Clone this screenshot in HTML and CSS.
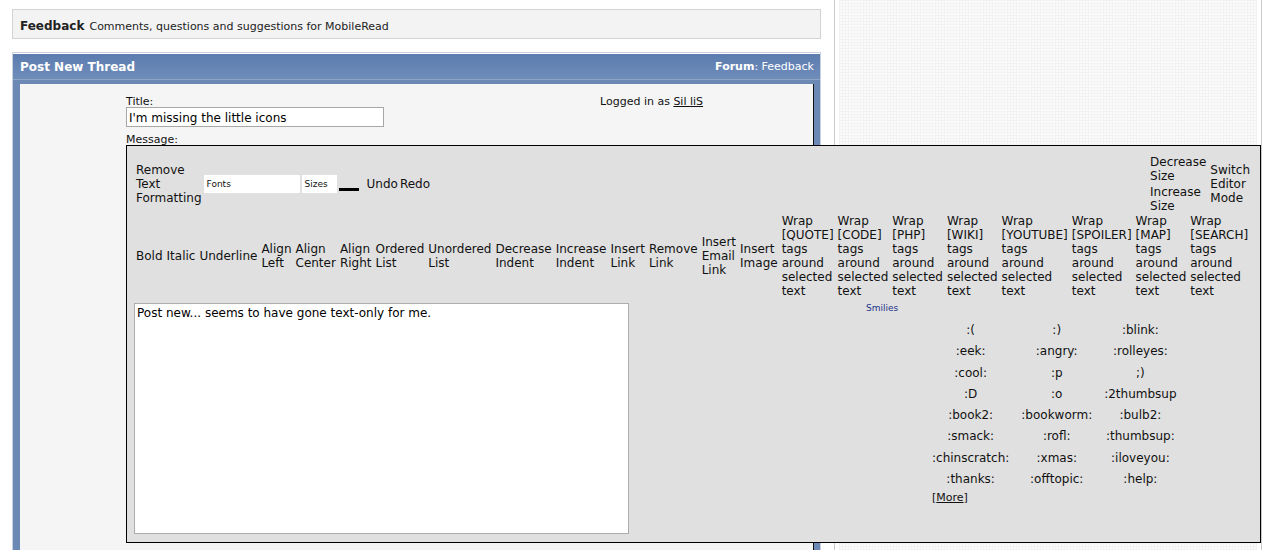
FILE: index.html
```html
<!DOCTYPE html>
<html>
<head>
<meta charset="utf-8">
<title>Post New Thread</title>
<link rel="stylesheet" href="styles.css">
</head>
<body>
<div class="page">
  <div class="main">
    <div class="catbox"><b class="cat-title">Feedback</b> <span class="cat-desc">Comments, questions and suggestions for MobileRead</span></div>

    <div class="panel">
      <div class="panel-head">
        <span class="panel-title">Post New Thread</span>
        <span class="panel-forum"><b>Forum</b>: Feedback</span>
      </div>
      <div class="panel-body">
        <div class="inner">
          <div class="toprow">
            <div class="titlecol">
              <div class="lbl">Title:</div>
              <input class="title-input" type="text" value="I'm missing the little icons">
            </div>
            <div class="logged">Logged in as <u>Sil liS</u></div>
          </div>
          <div class="lbl msg-lbl">Message:</div>

          <div class="editor">
            <div class="tb-row1">
              <span class="tb">Remove Text Formatting</span>
              <span class="sel sel-fonts">Fonts</span>
              <span class="sel sel-sizes">Sizes</span>
              <span class="color"><span class="color-bar"></span></span>
              <span class="tb">Undo</span>
              <span class="tb">Redo</span>
              <span class="size-block">
                <span class="tb">Decrease Size</span>
                <span class="tb">Increase Size</span>
              </span>
              <span class="tb">Switch Editor Mode</span>
            </div>
            <div class="tb-row2">
              <span class="tb">Bold</span>
              <span class="tb">Italic</span>
              <span class="tb">Underline</span>
              <span class="tb">Align Left</span>
              <span class="tb">Align Center</span>
              <span class="tb">Align Right</span>
              <span class="tb">Ordered List</span>
              <span class="tb">Unordered List</span>
              <span class="tb">Decrease Indent</span>
              <span class="tb">Increase Indent</span>
              <span class="tb">Insert Link</span>
              <span class="tb">Remove Link</span>
              <span class="tb">Insert Email Link</span>
              <span class="tb">Insert Image</span>
              <span class="tb">Wrap [QUOTE] tags around selected text</span>
              <span class="tb">Wrap [CODE] tags around selected text</span>
              <span class="tb">Wrap [PHP] tags around selected text</span>
              <span class="tb">Wrap [WIKI] tags around selected text</span>
              <span class="tb">Wrap [YOUTUBE] tags around selected text</span>
              <span class="tb">Wrap [SPOILER] tags around selected text</span>
              <span class="tb">Wrap [MAP] tags around selected text</span>
              <span class="tb">Wrap [SEARCH] tags around selected text</span>
            </div>
            <div class="edit-area">
              <textarea class="message" readonly>Post new... seems to have gone text-only for me.</textarea>
              <div class="smilies">
                <div class="smilies-lbl">Smilies</div>
                <table class="smilies-table">
                  <tr><td>:(</td><td>:)</td><td>:blink:</td></tr>
                  <tr><td>:eek:</td><td>:angry:</td><td>:rolleyes:</td></tr>
                  <tr><td>:cool:</td><td>:p</td><td>;)</td></tr>
                  <tr><td>:D</td><td>:o</td><td>:2thumbsup</td></tr>
                  <tr><td>:book2:</td><td>:bookworm:</td><td>:bulb2:</td></tr>
                  <tr><td>:smack:</td><td>:rofl:</td><td>:thumbsup:</td></tr>
                  <tr><td>:chinscratch:</td><td>:xmas:</td><td>:iloveyou:</td></tr>
                  <tr><td>:thanks:</td><td>:offtopic:</td><td>:help:</td></tr>
                  <tr><td class="more" colspan="3">[<u>More</u>]</td></tr>
                </table>
              </div>
            </div>
          </div>
        </div>
      </div>
    </div>
  </div>

  <div class="sidebar">
    <div class="sidebar-inner"></div>
  </div>
</div>
</body>
</html>
```

FILE: styles.css
```css
html, body {
  margin: 0;
  padding: 0;
  height: 550px;
  overflow: hidden;
  background: #fff;
}

body {
  font-family: "DejaVu Sans", Verdana, sans-serif;
  color: #000;
}

.page {
  display: flex;
  height: 550px;
}

.main {
  flex: none;
  width: 809px;
  margin-left: 12px;
  padding-top: 9px;
}

/* category box */
.catbox {
  height: 28px;
  line-height: 29px;
  border: 1px solid #d3d3d3;
  background: #f3f3f3;
  padding: 0 7px;
  color: #222;
  white-space: nowrap;
}

.cat-title {
  font-size: 12px;
}

.cat-desc {
  font-size: 11px;
}

/* post panel */
.panel {
  margin-top: 13px;
  border: 1px solid #c8d0dd;
  padding-top: 1px;
  background: #fff;
}

.panel-head {
  height: 25px;
  padding: 0 6px 0 7px;
  display: flex;
  align-items: center;
  justify-content: space-between;
  background: linear-gradient(#5c7caf, #6f8dba);
  color: #fff;
}

.panel-title {
  font-size: 12px;
  font-weight: bold;
}

.panel-forum {
  font-size: 11px;
}

.panel-body {
  background: #6c89b6;
  border-top: 1px solid #8ea4c7;
  padding: 4px 6px 0 7px;
}

.inner {
  background: #f5f5f5;
  border-right: 1px solid #111;
  min-height: 560px;
  padding: 12px 0 0 106px;
}

.toprow {
  display: flex;
  align-items: flex-start;
}

.titlecol {
  width: 474px;
}

.lbl,
.logged {
  font-size: 11px;
  line-height: 12px;
  color: #111;
}

.title-input {
  display: block;
  width: 258px;
  height: 20px;
  box-sizing: border-box;
  margin: -1px 0 0 0;
  border: 1px solid #a7a7a7;
  background: #fff;
  padding: 1px 2px 0 2px;
  font-family: "DejaVu Sans", Verdana, sans-serif;
  font-size: 12px;
  color: #000;
  outline: none;
}

.msg-lbl {
  margin-top: 7px;
}

/* editor */
.editor {
  position: relative;
  z-index: 2;
  width: 1135px;
  height: 398px;
  box-sizing: border-box;
  border: 1px solid #000;
  background: #e0e0e0;
  margin-top: -1px;
  padding: 8px 7px;
  font-size: 12px;
  color: #111;
}

.tb {
  width: min-content;
  line-height: 14px;
  flex: none;
}

.tb-row1 {
  height: 58px;
  display: flex;
  align-items: center;
  gap: 2px;
  padding: 1px 3px 0 2px;
  box-sizing: border-box;
}

.sel {
  flex: none;
  height: 18px;
  box-sizing: border-box;
  background: #fff;
  font-size: 9px;
  padding-left: 3px;
  display: flex;
  align-items: center;
}

.sel-fonts {
  width: 96px;
}

.sel-sizes {
  width: 35px;
}

.color {
  flex: none;
  width: 26px;
  height: 18px;
  box-sizing: border-box;
  padding-bottom: 2px;
  display: flex;
  align-items: flex-end;
}

.color-bar {
  width: 20px;
  height: 3px;
  background: #000;
}

.size-block {
  margin-left: auto;
  display: flex;
  flex-direction: column;
  gap: 2px;
  margin-right: 2px;
}

.tb-row2 {
  margin-top: 1px;
  height: 84px;
  display: flex;
  align-items: center;
  gap: 4px;
  padding: 1px 0 0 2px;
  box-sizing: border-box;
}

.edit-area {
  margin-top: 6px;
  display: flex;
}

.message {
  flex: none;
  width: 495px;
  height: 231px;
  box-sizing: border-box;
  margin: 0;
  border: 1px solid #adadad;
  padding: 2px 2px;
  background: #fff;
  font-family: "DejaVu Sans", Verdana, sans-serif;
  font-size: 12px;
  line-height: 14px;
  color: #000;
  resize: none;
  overflow: hidden;
  outline: none;
}

.smilies {
  flex: 1;
}

.smilies-lbl {
  font-size: 9px;
  line-height: 11px;
  padding-left: 237px;
  color: #23338a;
}

.smilies-table {
  margin: 6px 0 0 297px;
  border-collapse: collapse;
}

.smilies-table td {
  padding: 3px 6px;
  line-height: 15.3px;
  text-align: center;
  font-size: 12px;
  color: #111;
  white-space: nowrap;
}

.smilies-table td.more {
  text-align: left;
  font-size: 11px;
  line-height: 14px;
  padding-top: 1px;
}

/* sidebar */
.sidebar {
  flex: none;
  width: 418px;
  margin-left: 13px;
  padding: 0 4px 0 4px;
  border-left: 1px solid #cacaca;
  border-right: 1px solid #cacaca;
}

.sidebar-inner {
  height: 100%;
  background-color: #fbfbfb;
  background-image:
    repeating-linear-gradient(0deg, #f3f3f3 0 1px, transparent 1px 3px),
    repeating-linear-gradient(90deg, #f3f3f3 0 1px, transparent 1px 3px);
}
```
